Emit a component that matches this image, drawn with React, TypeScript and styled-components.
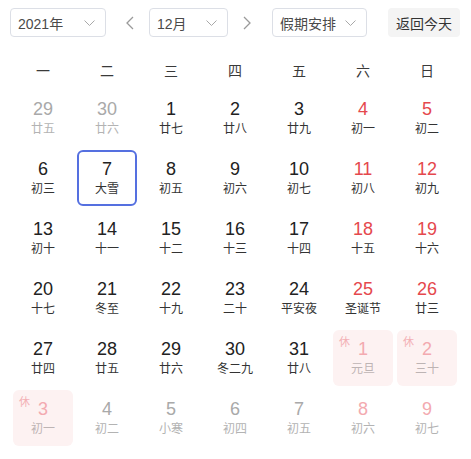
import styled, { createGlobalStyle, css } from "styled-components";

const GlobalStyle = createGlobalStyle`
  body {
    margin: 0;
    background: #fff;
    font-family: "Liberation Sans", "Noto Sans CJK SC", sans-serif;
    color: #333;
  }
`;

type Day = {
  num: number;
  lunar: string;
  other?: boolean;
  weekend?: boolean;
  rest?: boolean;
  today?: boolean;
};

const rows: Day[][] = [
  [
    { num: 29, lunar: "廿五", other: true },
    { num: 30, lunar: "廿六", other: true },
    { num: 1, lunar: "廿七" },
    { num: 2, lunar: "廿八" },
    { num: 3, lunar: "廿九" },
    { num: 4, lunar: "初一", weekend: true },
    { num: 5, lunar: "初二", weekend: true },
  ],
  [
    { num: 6, lunar: "初三" },
    { num: 7, lunar: "大雪", today: true },
    { num: 8, lunar: "初五" },
    { num: 9, lunar: "初六" },
    { num: 10, lunar: "初七" },
    { num: 11, lunar: "初八", weekend: true },
    { num: 12, lunar: "初九", weekend: true },
  ],
  [
    { num: 13, lunar: "初十" },
    { num: 14, lunar: "十一" },
    { num: 15, lunar: "十二" },
    { num: 16, lunar: "十三" },
    { num: 17, lunar: "十四" },
    { num: 18, lunar: "十五", weekend: true },
    { num: 19, lunar: "十六", weekend: true },
  ],
  [
    { num: 20, lunar: "十七" },
    { num: 21, lunar: "冬至" },
    { num: 22, lunar: "十九" },
    { num: 23, lunar: "二十" },
    { num: 24, lunar: "平安夜" },
    { num: 25, lunar: "圣诞节", weekend: true },
    { num: 26, lunar: "廿三", weekend: true },
  ],
  [
    { num: 27, lunar: "廿四" },
    { num: 28, lunar: "廿五" },
    { num: 29, lunar: "廿六" },
    { num: 30, lunar: "冬二九" },
    { num: 31, lunar: "廿八" },
    { num: 1, lunar: "元旦", other: true, rest: true },
    { num: 2, lunar: "三十", other: true, rest: true },
  ],
  [
    { num: 3, lunar: "初一", other: true, rest: true },
    { num: 4, lunar: "初二", other: true },
    { num: 5, lunar: "小寒", other: true },
    { num: 6, lunar: "初四", other: true },
    { num: 7, lunar: "初五", other: true },
    { num: 8, lunar: "初六", other: true, weekend: true },
    { num: 9, lunar: "初七", other: true, weekend: true },
  ],
];

const weekdays = ["一", "二", "三", "四", "五", "六", "日"];

const Chevron = ({ dir }: { dir: "down" | "left" | "right" }) => {
  if (dir === "down") {
    return (
      <svg width="11" height="6" viewBox="0 0 11 6">
        <path d="M0.5 0.5 L5.5 5.5 L10.5 0.5" fill="none" stroke="#a8a8a8" strokeWidth="1" />
      </svg>
    );
  }
  return (
    <svg width="8" height="14" viewBox="0 0 8 14">
      <path
        d={dir === "left" ? "M7 1 L1 7 L7 13" : "M1 1 L7 7 L1 13"}
        fill="none"
        stroke="#9a9a9a"
        strokeWidth="1.3"
      />
    </svg>
  );
};

const App = () => {
  return (
    <Page>
      <GlobalStyle />
      <Toolbar>
        <Select width={96}>
          <span>2021年</span>
          <Chevron dir="down" />
        </Select>
        <ArrowButton $ml={12} $mr={7}>
          <Chevron dir="left" />
        </ArrowButton>
        <Select width={79}>
          <span>12月</span>
          <Chevron dir="down" />
        </Select>
        <ArrowButton $ml={7} $mr={13}>
          <Chevron dir="right" />
        </ArrowButton>
        <Select width={95}>
          <span>假期安排</span>
          <Chevron dir="down" />
        </Select>
        <TodayButton>返回今天</TodayButton>
      </Toolbar>

      <WeekHeader>
        {weekdays.map((w) => (
          <WeekLabel key={w}>{w}</WeekLabel>
        ))}
      </WeekHeader>

      <Grid>
        {rows.flat().map((d, i) => (
          <Cell key={i} $today={d.today} $rest={d.rest}>
            {d.rest && <RestTag>休</RestTag>}
            <DayNum $other={d.other} $weekend={d.weekend} $rest={d.rest}>
              {d.num}
            </DayNum>
            <Lunar $other={d.other} $rest={d.rest}>
              {d.lunar}
            </Lunar>
          </Cell>
        ))}
      </Grid>
    </Page>
  );
};

const Page = styled.div`
  width: 471px;
  height: 459px;
  padding: 8px 0 0 10px;
  box-sizing: border-box;
  overflow: hidden;
`;

const Toolbar = styled.div`
  display: flex;
  align-items: center;
  height: 29px;
`;

const Select = styled.div<{ width: number }>`
  width: ${(p) => p.width}px;
  height: 29px;
  box-sizing: border-box;
  border: 1px solid #dcdfe6;
  border-radius: 4px;
  display: flex;
  align-items: center;
  justify-content: space-between;
  padding: 0 10px 0 7px;
  font-size: 14px;
  color: #4a4a4a;

  svg {
    margin-top: 1px;
  }
`;

const ArrowButton = styled.div<{ $ml: number; $mr: number }>`
  width: 24px;
  height: 29px;
  display: flex;
  align-items: center;
  justify-content: center;
  margin-left: ${(p) => p.$ml}px;
  margin-right: ${(p) => p.$mr}px;
`;

const TodayButton = styled.div`
  margin-left: 21px;
  height: 29px;
  padding: 0 8px;
  border-radius: 4px;
  background: #f4f4f4;
  display: flex;
  align-items: center;
  font-size: 14px;
  color: #333;
`;

const WeekHeader = styled.div`
  display: grid;
  grid-template-columns: repeat(7, 64px);
  margin-top: 15px;
  margin-left: 1px;
  height: 36px;
`;

const WeekLabel = styled.div`
  display: flex;
  align-items: center;
  justify-content: center;
  font-size: 14px;
  color: #3a3a3a;
`;

const Grid = styled.div`
  display: grid;
  grid-template-columns: repeat(7, 64px);
  grid-auto-rows: 60px;
  margin-left: 1px;
`;

const Cell = styled.div<{ $today?: boolean; $rest?: boolean }>`
  position: relative;
  margin: 2px;
  border-radius: 6px;
  box-sizing: border-box;
  display: flex;
  flex-direction: column;
  align-items: center;
  justify-content: center;
  border: 2px solid transparent;
  ${(p) =>
    p.$today &&
    css`
      border-color: #5570e0;
    `}
  ${(p) =>
    p.$rest &&
    css`
      background: #fdf2f2;
    `}
`;

const RestTag = styled.span`
  position: absolute;
  top: 1px;
  left: 4px;
  font-size: 11px;
  color: #f3b0b5;
`;

const DayNum = styled.div<{ $other?: boolean; $weekend?: boolean; $rest?: boolean }>`
  font-size: 18px;
  line-height: 21px;
  color: ${(p) =>
    p.$other
      ? p.$weekend || p.$rest
        ? "#f3aab0"
        : "#a9a9a9"
      : p.$weekend
      ? "#e5484d"
      : "#222"};
`;

const Lunar = styled.div<{ $other?: boolean; $rest?: boolean }>`
  font-size: 12px;
  line-height: 16px;
  margin-top: 1px;
  color: ${(p) => (p.$rest ? "#bdb4b4" : p.$other ? "#b3b3b3" : "#333")};
  white-space: nowrap;
`;

export default App;
